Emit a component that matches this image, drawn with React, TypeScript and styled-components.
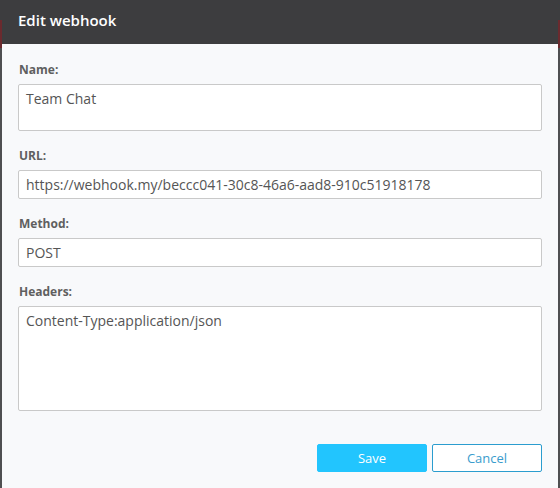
import React, { useState } from 'react';
import styled, { createGlobalStyle } from 'styled-components';

const GlobalStyle = createGlobalStyle`
  html, body {
    margin: 0;
    padding: 0;
    height: 100%;
  }
  body {
    font-family: "Open Sans", "Liberation Sans", sans-serif;
    background: linear-gradient(
      to bottom,
      #3d3d3f 0px,
      #3d3d3f 20px,
      #6b2a2e 20px,
      #6b2a2e 48px,
      #4f4f51 48px
    );
  }
`;

const Modal = styled.div`
  width: 556px;
  height: 488px;
  margin-left: 2px;
  background: #f8f9fb;
  display: flex;
  flex-direction: column;
`;

const Header = styled.div`
  height: 44px;
  flex-shrink: 0;
  background: #3d3d3f;
  display: flex;
  align-items: center;
  padding: 0 16px 4px;
  box-sizing: border-box;
`;

const Title = styled.h2`
  margin: 0;
  color: #ffffff;
  font-size: 15px;
  font-weight: 600;
`;

const Body = styled.div`
  padding: 18px 16px 0;
  display: flex;
  flex-direction: column;
  gap: 17px;
`;

const Field = styled.div`
  display: flex;
  flex-direction: column;
  gap: 6px;
`;

const Label = styled.label`
  font-size: 12px;
  line-height: 16px;
  font-weight: 700;
  color: #5f5f5f;
  padding-left: 1px;
`;

const inputBase = `
  box-sizing: border-box;
  width: 100%;
  margin: 0;
  border: 1px solid #c9c9c9;
  border-radius: 2px;
  background: #ffffff;
  font-family: "Open Sans", "Liberation Sans", sans-serif;
  font-size: 14px;
  color: #555555;
  padding: 0 7px;
  outline: none;
`;

const Input = styled.input`
  ${inputBase}
  height: 29px;
`;

const TextArea = styled.textarea<{ $height: number }>`
  ${inputBase}
  height: ${(p) => p.$height}px;
  padding-top: 4px;
  line-height: 20px;
  resize: none;
`;

const Footer = styled.div`
  display: flex;
  justify-content: flex-end;
  gap: 5px;
  padding: 33px 16px 0;
`;

const Button = styled.button<{ $primary?: boolean }>`
  width: 110px;
  height: 28px;
  box-sizing: border-box;
  border-radius: 2px;
  font-family: "Open Sans", "Liberation Sans", sans-serif;
  font-size: 13px;
  cursor: pointer;
  border: 1px solid ${(p) => (p.$primary ? '#22c5fe' : '#2b9dcf')};
  background: ${(p) => (p.$primary ? '#22c5fe' : '#ffffff')};
  color: ${(p) => (p.$primary ? '#ffffff' : '#3a9ccd')};
`;

export default function App() {
  const [name, setName] = useState('Team Chat');
  const [url, setUrl] = useState('https://webhook.my/beccc041-30c8-46a6-aad8-910c51918178');
  const [method, setMethod] = useState('POST');
  const [headers, setHeaders] = useState('Content-Type:application/json');

  return (
    <>
      <GlobalStyle />
      <Modal>
        <Header>
          <Title>Edit webhook</Title>
        </Header>
        <Body>
          <Field>
            <Label>Name:</Label>
            <TextArea $height={47} value={name} onChange={(e) => setName(e.target.value)} />
          </Field>
          <Field>
            <Label>URL:</Label>
            <Input value={url} onChange={(e) => setUrl(e.target.value)} />
          </Field>
          <Field>
            <Label>Method:</Label>
            <Input value={method} onChange={(e) => setMethod(e.target.value)} />
          </Field>
          <Field>
            <Label>Headers:</Label>
            <TextArea $height={105} value={headers} onChange={(e) => setHeaders(e.target.value)} />
          </Field>
        </Body>
        <Footer>
          <Button $primary>Save</Button>
          <Button>Cancel</Button>
        </Footer>
      </Modal>
    </>
  );
}
